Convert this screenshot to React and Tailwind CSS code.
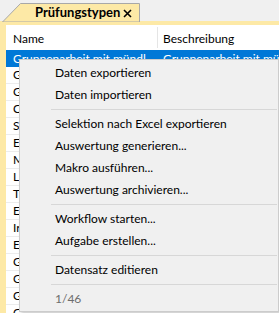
import React from "react";

const rows = ["G", "G", "C", "S", "E", "M", "L", "T", "E", "Ir", "E", "G", "G", "G", "G"];

function Sep() {
  return (
    <div className="h-[7px] flex items-center pl-[31px] pr-[1px]">
      <div className="h-px w-full bg-[#d7d7d7]" />
    </div>
  );
}

function Item({ children, muted }) {
  return (
    <div className={`h-[22px] flex items-center pl-[35px] ${muted ? "text-[#6d6d6d]" : "text-black"}`}>
      {children}
    </div>
  );
}

export default function App() {
  return (
    <div
      className="relative w-[279px] h-[313px] overflow-hidden bg-[#f0f0f0] text-[12px] leading-none"
      style={{ fontFamily: 'Lato, "Noto Sans", sans-serif' }}
    >
      {/* tab strip */}
      <div className="h-[21px] flex items-end">
        <div className="relative ml-[2px] w-[138px] h-[18px] flex items-center">
          <svg className="absolute inset-0" width="138" height="19" viewBox="0 0 138 19">
            <polygon points="0.5,19 18.5,0.5 137.5,0.5 137.5,19" fill="#fde9a6" stroke="#a8a8a8" />
          </svg>
          <span className="relative ml-[33px] font-bold text-black text-[13px]">Prüfungstypen</span>
          <svg className="absolute left-[121px] top-[6px]" width="9" height="9" viewBox="0 0 9 9">
            <path d="M1 1L8 8M8 1L1 8" stroke="#000" strokeWidth="1.6" />
          </svg>
        </div>
      </div>

      {/* yellow frame */}
      <div className="bg-[#fde9a6] pt-[4px] pl-[6px] h-[292px]">
        <div className="bg-white h-full">
          <div className="h-[25px] flex items-center">
            <div className="w-[151px] shrink-0 pl-[7px] pt-[2px]">Name</div>
            <div className="w-px h-[21px] bg-[#e5e5e5]" />
            <div className="pl-[5px] pt-[2px]">Beschreibung</div>
          </div>
          <div className="h-[17px] bg-[#0078d7] text-white flex items-center whitespace-nowrap overflow-hidden">
            <div className="w-[151px] shrink-0 pl-[7px] overflow-hidden">Gruppenarbeit mit mündl</div>
            <div className="pl-[6px] shrink-0">Gruppenarbeit mit mündl</div>
          </div>
          {rows.map((r, i) => (
            <div key={i} className="h-[17px] border-b border-[#ececec] flex items-center pl-[7px]">
              {r}
            </div>
          ))}
        </div>
      </div>

      {/* context menu */}
      <div className="absolute left-[19px] top-[59px] w-[260px] h-[253px] bg-[#f0f0f0] border border-[#cccccc] shadow-[2px_2px_3px_rgba(0,0,0,0.2)] pt-[2px]">
        <Item>Daten exportieren</Item>
        <Item>Daten importieren</Item>
        <Sep />
        <Item>Selektion nach Excel exportieren</Item>
        <Item>Auswertung generieren...</Item>
        <Item>Makro ausführen...</Item>
        <Item>Auswertung archivieren...</Item>
        <Sep />
        <Item>Workflow starten...</Item>
        <Item>Aufgabe erstellen...</Item>
        <Sep />
        <Item>Datensatz editieren</Item>
        <Sep />
        <Item muted>1/46</Item>
      </div>
    </div>
  );
}
